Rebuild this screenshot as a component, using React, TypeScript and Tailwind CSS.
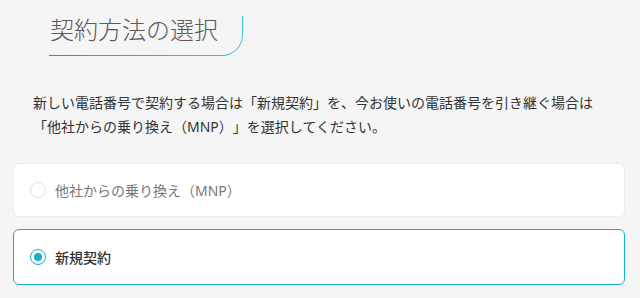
import { useState } from "react";

const options = [
  { id: "mnp", label: "他社からの乗り換え（MNP）" },
  { id: "new", label: "新規契約" },
];

const Radio = ({ checked }: { checked: boolean }) => (
  <span
    className={
      "flex h-4 w-4 shrink-0 items-center justify-center rounded-full bg-white " +
      (checked ? "border-[1.5px] border-[#14b1cb]" : "border border-[#e2e2e2]")
    }
  >
    {checked && <span className="h-2 w-2 rounded-full bg-[#14b1cb]" />}
  </span>
);

const App = () => {
  const [selected, setSelected] = useState("new");

  return (
    <main
      className="min-h-[298px] w-[640px] bg-[#f5f5f5] pt-4 [text-spacing-trim:space-all]"
      style={{ fontFamily: '"Noto Sans", "Noto Sans CJK JP", sans-serif' }}
    >
      <div className="ml-[49px] inline-block rounded-br-[21px] bg-gradient-to-r from-[#1a9fb6] to-[#37c6de] pb-px pr-px">
        <h1 className="rounded-br-[20px] bg-[#f5f5f5] pb-[13px] pl-px pr-[24px] font-['Noto_Sans_CJK_JP_Light','Noto_Sans_CJK_JP',sans-serif] text-[24px] font-light leading-[26px] text-[#5a5a5a]">
          契約方法の選択
        </h1>
      </div>

      <p className="mt-[35px] px-[33px] text-[14px] leading-[24px] text-[#333]">
        新しい電話番号で契約する場合は「新規契約」を、今お使いの電話番号を引き継ぐ場合は
        <br />
        「他社からの乗り換え（MNP）」を選択してください。
      </p>

      <div className="mt-[24px] flex flex-col gap-3 pl-[13px]">
        {options.map((o) => {
          const checked = selected === o.id;
          return (
            <button
              key={o.id}
              onClick={() => setSelected(o.id)}
              className={
                "flex w-[612px] items-center gap-[9px] rounded-md bg-white pl-[16px] text-left text-[14px] " +
                (checked
                  ? "h-[56px] border border-[#14b1cb] font-medium text-[#333]"
                  : "h-[54px] border border-[#ececec] text-[#777]")
              }
            >
              <Radio checked={checked} />
              <span>{o.label}</span>
            </button>
          );
        })}
      </div>
    </main>
  );
};

export default App;
